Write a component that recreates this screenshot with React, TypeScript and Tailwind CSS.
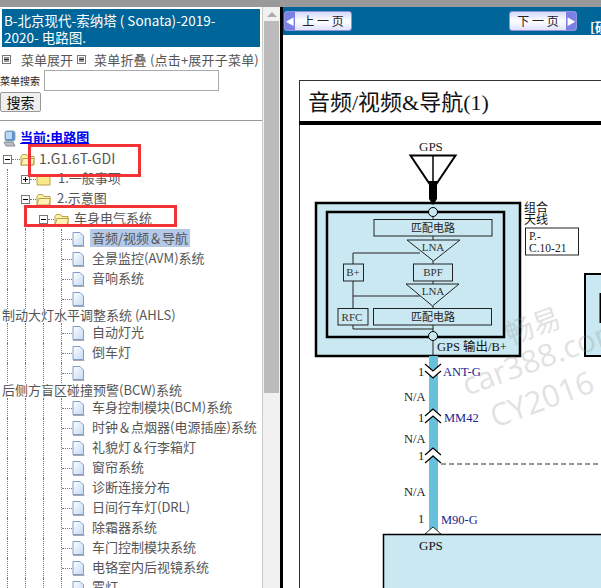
type TreeRow =
  | { kind: "leaf"; label?: string; selected?: boolean }
  | { kind: "wrap"; label: string; height: string };

const rows: TreeRow[] = [
  { kind: "leaf", label: "音频/视频＆导航", selected: true },
  { kind: "leaf", label: "全景监控(AVM)系统" },
  { kind: "leaf", label: "音响系统" },
  { kind: "leaf" },
  { kind: "wrap", label: "制动大灯水平调整系统 (AHLS)", height: "h-[14px]" },
  { kind: "leaf", label: "自动灯光" },
  { kind: "leaf", label: "倒车灯" },
  { kind: "leaf" },
  { kind: "wrap", label: "后侧方盲区碰撞预警(BCW)系统", height: "h-[15px]" },
  { kind: "leaf", label: "车身控制模块(BCM)系统" },
  { kind: "leaf", label: "时钟＆点烟器(电源插座)系统" },
  { kind: "leaf", label: "礼貌灯＆行李箱灯" },
  { kind: "leaf", label: "窗帘系统" },
  { kind: "leaf", label: "诊断连接分布" },
  { kind: "leaf", label: "日间行车灯(DRL)" },
  { kind: "leaf", label: "除霜器系统" },
  { kind: "leaf", label: "车门控制模块系统" },
  { kind: "leaf", label: "电铬室内后视镜系统" },
  { kind: "leaf", label: "雾灯" },
];

const Guide = () => <div className="h-full w-[18px] shrink-0 border-l border-dotted border-[#777]" />;

const Dash = ({ width }: { width: string }) => <div className={`${width} shrink-0 border-t border-dotted border-[#777]`} />;

const ToggleBox = ({ open }: { open: boolean }) => (
  <svg width="9" height="9" viewBox="0 0 9 9" className="shrink-0">
    <rect x="0.5" y="0.5" width="8" height="8" fill="#fff" stroke="#777" />
    <path d="M2 4.5h5" stroke="#000" />
    {!open && <path d="M4.5 2v5" stroke="#000" />}
  </svg>
);

const Folder = ({ open }: { open: boolean }) => (
  <svg width="15" height="13" viewBox="0 0 15 13" className="shrink-0">
    <path d="M1 3.5 2.5 1.5h4L8 3.5h6v8.5H1z" fill={open ? "#fdf0a8" : "#fbe88a"} stroke="#b8a24a" />
    {open && <path d="M1 12 3 5.5h11.5L13 12z" fill="#fff3b5" stroke="#b8a24a" />}
  </svg>
);

const Page = () => (
  <svg width="13" height="15" viewBox="0 0 13 15" className="shrink-0">
    <defs>
      <linearGradient id="pageFill" x1="0" y1="0" x2="1" y2="1">
        <stop offset="0" stopColor="#ffffff" />
        <stop offset="1" stopColor="#c4d9f4" />
      </linearGradient>
    </defs>
    <path d="M1 14.5h11.5" stroke="#aaa" />
    <path d="M1 .5h7l3.5 3.5v9.500H1z" fill="url(#pageFill)" stroke="#7f9ccb" />
  </svg>
);

const Computer = () => (
  <svg width="13" height="17" viewBox="0 0 13 17" className="shrink-0">
    <rect x="2" y="1" width="10" height="10" rx="2" fill="#5b8fd8" stroke="#8aa" />
    <rect x="3" y="2" width="6" height="7" fill="#bcd8f5" />
    <path d="M1 12h9l2 4H3z" fill="#b9bcc4" stroke="#8b8f99" />
  </svg>
);

const MenuIcon = () => (
  <svg width="9" height="9" viewBox="0 0 9 9" className="shrink-0">
    <rect x="0.5" y="0.5" width="8" height="8" fill="#fff" stroke="#777" />
    <path d="M2 3h5M2 4.5h5M2 6h5" stroke="#333" />
  </svg>
);

const NavButton = ({ label, next }: { label: string; next?: boolean }) => (
  <div className={`flex h-5 w-[68px] shrink-0 items-center overflow-hidden rounded-[3px] border border-[#8f95dd] bg-linear-to-b from-[#d5d9fb] via-white to-[#dfe2fb] ${next ? "flex-row-reverse" : ""}`}>
    <div className="flex h-full w-[10px] shrink-0 items-center justify-center bg-[#7b80e6] text-[9px] leading-none text-white">
      {next ? "▶" : "◀"}
    </div>
    <span className="flex-1 pb-[1px] text-center text-[12px] leading-none whitespace-pre text-[#222]">{label}</span>
  </div>
);

const cjk = "'Noto Sans CJK SC', sans-serif";
const serif = "'Liberation Serif', 'Noto Sans CJK SC', serif";
const wm = "'Open Sans', sans-serif";

const Chevron = ({ y, up }: { y: number; up?: boolean }) => (
  <path d={up ? `M425 ${y + 7}l8-7 8 7` : `M425 ${y}l8 7 8-7`} fill="none" stroke="#000" strokeWidth="1.2" />
);

const Diagram = () => (
  <svg viewBox="283 35 318 553" className="block h-[553px] w-[318px]">
    <rect x="299.5" y="80.5" width="320" height="530" fill="#fff" stroke="#333" />
    <rect x="299" y="121" width="320" height="4" fill="#000" />
    <text x="308" y="110" fontSize="22" fontFamily={serif} fill="#111">音频/视频&amp;导航(1)</text>

    <text x="419" y="151" fontFamily={serif} fontSize="13" fill="#222">GPS</text>
    <path d="M410.5 155.5h45L433 189z" fill="#fff" stroke="#000" strokeWidth="2" />
    <path d="M433 155v30" stroke="#000" strokeWidth="1.5" />

    <rect x="316" y="203" width="204" height="153" fill="#c9e8f1" stroke="#000" strokeWidth="2.5" />
    <rect x="327" y="212" width="177" height="125" fill="#c9e8f1" stroke="#000" strokeWidth="2.5" />
    <path d="M429 181h8v18l-4 6-4-6z" fill="#000" />

    <g fill="none" stroke="#222" strokeWidth="1">
      <path d="M433 217v23M433 261v3M433 281v3M433 306v2M433 325v31" />
      <path d="M420 253h-67v11M353 281v27M353 296h67M353 325v4h80" />
    </g>
    <g fill="#c9e8f1" stroke="#222" strokeWidth="1">
      <rect x="374" y="219.5" width="118" height="16.5" />
      <rect x="373.5" y="308.5" width="118" height="16.5" />
      <rect x="413.5" y="264" width="39" height="17" />
      <rect x="343.5" y="264" width="20" height="17" />
      <rect x="338" y="308.5" width="30" height="16.5" />
      <path d="M407 240h53l-26.500 21z" />
      <path d="M406 284h53l-26.500 22z" />
    </g>
    <circle cx="433" cy="212" r="4.500" fill="#c9e8f1" stroke="#000" />
    <circle cx="433" cy="336" r="4.500" fill="#c9e8f1" stroke="#000" />

    <g fontFamily={cjk} fontSize="11" fill="#222" textAnchor="middle">
      <text x="433" y="232">匹配电路</text>
      <text x="433" y="321">匹配电路</text>
    </g>
    <g fontFamily={serif} fontSize="11" fill="#333" textAnchor="middle">
      <text x="433" y="251">LNA</text>
      <text x="433" y="295">LNA</text>
      <text x="433" y="276">BPF</text>
      <text x="353" y="276">B+</text>
      <text x="352" y="321">RFC</text>
    </g>
    <text x="437" y="351" fontFamily={serif} fontSize="12.500" fill="#111">GPS 输出/B+</text>

    <text x="524" y="212" fontFamily={cjk} fontSize="12" fill="#111">组合</text>
    <text x="524" y="224" fontFamily={cjk} fontSize="12" fill="#111">天线</text>
    <rect x="525.500" y="228" width="53" height="27" fill="#fff" stroke="#222" />
    <text x="529" y="240" fontFamily={serif} fontSize="11.500" fill="#222">P.-</text>
    <text x="529" y="252" fontFamily={serif} fontSize="11.500" fill="#222">C.10-21</text>

    <rect x="585" y="274" width="40" height="82" fill="#c9e8f1" stroke="#000" strokeWidth="2" />
    <path d="M601 293v30" stroke="#000" strokeWidth="3" />

    <g fill="#888" opacity="0.24">
      <text x="533" y="336" fontSize="28" fontFamily={cjk} textAnchor="middle" transform="rotate(-20 533 326)">畅易</text>
      <text x="467" y="396" fontSize="31" fontFamily={wm} transform="rotate(-20 467 396)">car388.com</text>
      <text x="495" y="428" fontSize="31" fontFamily={wm} transform="rotate(-20 495 428)">CY2016</text>
    </g>

    <rect x="429" y="356" width="9" height="178" fill="#67c0dc" />
    <path d="M441 464h160" stroke="#333" strokeWidth="1" strokeDasharray="5 3" />

    <path d="M425 364l8 7 8-7v7l-8 7-8-7z" fill="#fff" />
    <Chevron y={364} />
    <Chevron y={371} />
    <path d="M425 416l8-7 8 7v7l-8-7-8 7z" fill="#fff" />
    <Chevron y={409} up />
    <Chevron y={416} up />
    <path d="M425 455l8-7 8 7v7l-8-7-8 7z" fill="#fff" />
    <Chevron y={448} up />
    <Chevron y={456} up />

    <g fontFamily={serif} fontSize="12.500" fill="#222">
      <text x="418" y="376">1</text>
      <text x="404" y="401">N/A</text>
      <text x="418" y="422">1</text>
      <text x="404" y="443">N/A</text>
      <text x="418" y="460">1</text>
      <text x="404" y="496">N/A</text>
      <text x="418" y="523">1</text>
    </g>
    <g fontFamily={serif} fontSize="12.500" fill="#22228c">
      <text x="443" y="376">ANT-G</text>
      <text x="444" y="422">MM42</text>
      <text x="441" y="524">M90-G</text>
    </g>

    <rect x="383.500" y="534.500" width="240" height="80" fill="#c9e8f1" stroke="#000" strokeWidth="1.500" />
    <path d="M425 534l8-7 8 7z" fill="#fff" stroke="#000" strokeWidth="0.800" />
    <text x="419" y="550" fontFamily={serif} fontSize="13" fill="#111">GPS</text>
  </svg>
);

export default function App() {
  return (
    <div className="relative flex h-[588px] w-[601px] flex-col overflow-hidden bg-white font-['Noto_Sans_CJK_SC',sans-serif] text-[13px] leading-none text-[#555]">
      <div className="h-[7px] shrink-0 bg-[#999]" />
      <div className="flex min-h-0 flex-1">
        <div className="w-[262px] shrink-0 overflow-hidden">
          <div className="mx-[2px] mt-[2px] h-[38px] bg-[#006699] px-[2px] pt-[3px] text-[13.5px] leading-[17px] text-white">
            B-北京现代-索纳塔 ( Sonata)-2019-
            <br />
            2020- 电路图.
          </div>
          <div className="mt-[4px] flex h-4 items-center pl-[2px] whitespace-nowrap">
            <MenuIcon />
            <span className="ml-[10px] mr-1">菜单展开</span>
            <MenuIcon />
            <span className="ml-2 tracking-[0.2px]">菜单折叠 (点击+展开子菜单)</span>
          </div>
          <div className="mt-[3px] flex h-[21px] items-center">
            <span className="w-[44px] text-[10px] text-[#222]">菜单搜索</span>
            <div className="h-[21px] w-[175px] border border-[#aaa] bg-white" />
          </div>
          <div className="mt-[1px] flex h-5 w-[41px] items-center justify-center rounded-[2px] border border-[#999] bg-[#efefef] text-[14px] text-[#111]">
            搜索
          </div>
          <div className="mt-[8px] h-[1px] bg-[#999]" />

          <div className="mt-[7px] flex h-5 items-center pl-[3px]">
            <Computer />
            <span className="ml-[4px] mb-[3px] font-bold text-[#0000ee] underline">当前:电路图</span>
          </div>
          <div className="mt-[1px] flex h-5 items-center pl-[3px]">
            <ToggleBox open />
            <Dash width="w-2" />
            <Folder open />
            <span className="ml-[4px] mb-[3px] text-[14px]">1.G1.6T-GDI</span>
          </div>
          <div className="flex h-5 items-center pl-[7px]">
            <Guide />
            <div className="-ml-[4px] flex items-center">
              <ToggleBox open={false} />
              <Dash width="w-[6px]" />
              <Folder open={false} />
              <span className="ml-[7px] mb-[3px]">1.一般事项</span>
            </div>
          </div>
          <div className="flex h-5 items-center pl-[7px]">
            <Guide />
            <div className="-ml-[4px] flex items-center">
              <ToggleBox open />
              <Dash width="w-[6px]" />
              <Folder open />
              <span className="ml-[6px] mb-[3px]">2.示意图</span>
            </div>
          </div>
          <div className="flex h-5 items-center pl-[7px]">
            <Guide />
            <Guide />
            <div className="-ml-[4px] flex items-center">
              <ToggleBox open />
              <Dash width="w-[6px]" />
              <Folder open />
              <span className="ml-[5px] mb-[3px]">车身电气系统</span>
            </div>
          </div>

          {rows.map((row, i) =>
            row.kind === "wrap" ? (
              <div key={i} className={`flex ${row.height} items-center pb-[3px] pl-[2px] whitespace-nowrap`}>
                {row.label}
              </div>
            ) : (
              <div key={i} className="flex h-5 items-center whitespace-nowrap pl-[7px]">
                <Guide />
                <Guide />
                <Guide />
                <div className="flex h-full w-[11px] shrink-0 items-center border-l border-dotted border-[#777]">
                  <Dash width="w-full" />
                </div>
                <Page />
                {row.label && (
                  <span className={`ml-[5px] mb-[2px] flex h-[18px] items-center px-[2px] pb-[1px] ${row.selected ? "bg-[#b4c8e8]" : ""}`}>
                    {row.label}
                  </span>
                )}
              </div>
            ),
          )}
        </div>

        <div className="flex w-[18px] shrink-0 flex-col items-center border-l border-[#ccc] bg-[#f1f1f1] pt-[2px]">
          <div className="mt-[3px] h-0 w-0 border-x-[5px] border-b-[5px] border-x-transparent border-b-[#aaa]" />
          <div className="mt-[4px] h-[372px] w-[15px] bg-[#bbb]" />
        </div>
        <div className="w-[3px] shrink-0 bg-black" />

        <div className="min-w-0 flex-1 overflow-hidden">
          <div className="flex h-[28px] items-start overflow-hidden bg-[#006699] pt-[4px] pl-[1px]">
            <NavButton label="上 一 页" />
            <div className="ml-[157px] shrink-0">
              <NavButton label="下 一 页" next />
            </div>
            <span className="ml-[13px] mt-[9px] shrink-0 text-[13px] font-bold whitespace-nowrap text-white">[硬</span>
          </div>
          <Diagram />
        </div>
      </div>

      <div className="absolute top-[144px] left-[28px] h-[33px] w-[113px] border-[3px] border-[#f33333]" />
      <div className="absolute top-[205px] left-[24px] h-[22px] w-[153px] border-[3px] border-[#f33333]" />
    </div>
  );
}
